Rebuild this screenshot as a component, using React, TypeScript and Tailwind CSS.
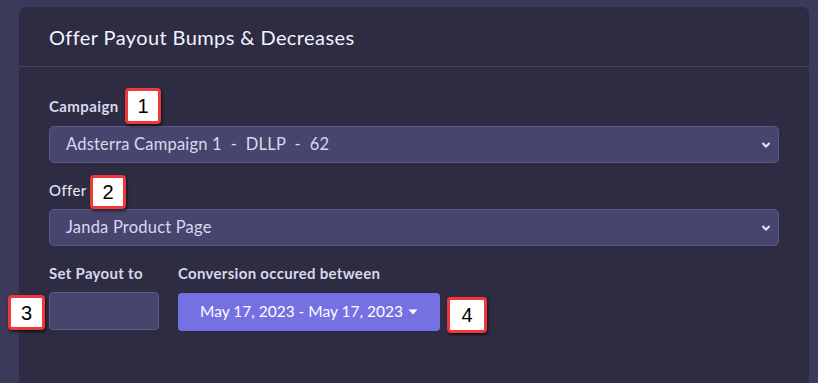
import React from 'react';

const Badge = ({ n, className }: { n: string; className: string }) => (
  <div
    className={`absolute flex items-center justify-center bg-white border-[3px] border-[#f0373c] rounded-[4px] shadow-[1px_2px_3px_rgba(0,0,0,0.6)] text-black text-[20px] font-['Liberation_Sans',Arial,sans-serif] leading-none ${className}`}
  >
    {n}
  </div>
);

const Chevron = () => (
  <svg width="10" height="8" viewBox="0 0 10 8" className="text-[#e6e6f5]">
    <path d="M1.5 2 L5 5.5 L8.5 2" fill="none" stroke="currentColor" strokeWidth="2" />
  </svg>
);

const SelectBox = ({ value }: { value: string }) => (
  <div className="flex items-center justify-between h-[37px] pl-4 pr-[7px] bg-[#47456e] border border-[#5b5883] rounded-[5px] text-[16.5px] tracking-[0.2px] text-[#d9d8ee]">
    <span className="whitespace-pre">{value}</span>
    <Chevron />
  </div>
);

const App: React.FC = () => {
  return (
    <div className="w-[818px] h-[383px] overflow-hidden bg-[#3c3a5a] pl-[19px] pr-[9px] pt-[7px] font-['Lato','Noto_Sans',sans-serif]">
      <div className="relative h-[400px] bg-[#2d2c42] rounded-t-[7px]">
        {/* header */}
        <div className="h-[60px] flex items-center px-[30px] border-b border-[#45435f]">
          <h2 className="text-[20px] text-[#f3f3fb] tracking-[0.4px]">Offer Payout Bumps &amp; Decreases</h2>
        </div>

        {/* body */}
        <div className="px-[30px] pt-[32px]">
          <div className="text-[15px] font-bold text-[#d8d8ec] tracking-[0.4px] leading-none mb-[12px]">Campaign</div>
          <SelectBox value="Adsterra Campaign 1  -  DLLP  -  62" />

          <div className="text-[15px] font-medium text-[#e2e2f2] tracking-[0.4px] leading-none mt-[20px] mb-[11px]">Offer</div>
          <SelectBox value="Janda Product Page" />

          <div className="flex gap-[19px] mt-[20px]">
            <div className="flex flex-col">
              <div className="text-[15px] font-bold text-[#d8d8ec] tracking-[0.3px] leading-none mb-[11px]">Set Payout to</div>
              <div className="w-[110px] h-[38px] bg-[#47456e] border border-[#5b5883] rounded-[4px]" />
            </div>
            <div className="flex flex-col">
              <div className="text-[15px] font-bold text-[#d8d8ec] tracking-[0.3px] leading-none mb-[12px]">Conversion occured between</div>
              <button className="w-[262px] h-[38px] bg-[#7571e2] rounded-[4px] text-white text-[15.5px] flex items-center justify-center gap-[5px]">
                <span>May 17, 2023 - May 17, 2023</span>
                <svg width="10" height="6" viewBox="0 0 10 6">
                  <path d="M0.5 0.5 L9.5 0.5 L5 5.5 Z" fill="white" />
                </svg>
              </button>
            </div>
          </div>
        </div>

        <Badge n="1" className="left-[106px] top-[81px] w-[36px] h-[36px]" />
        <Badge n="2" className="left-[71px] top-[168px] w-[36px] h-[34px]" />
        <Badge n="3" className="left-[-11px] top-[288px] w-[37px] h-[35px]" />
        <Badge n="4" className="left-[428px] top-[290px] w-[40px] h-[36px]" />
      </div>
    </div>
  );
};

export default App;
